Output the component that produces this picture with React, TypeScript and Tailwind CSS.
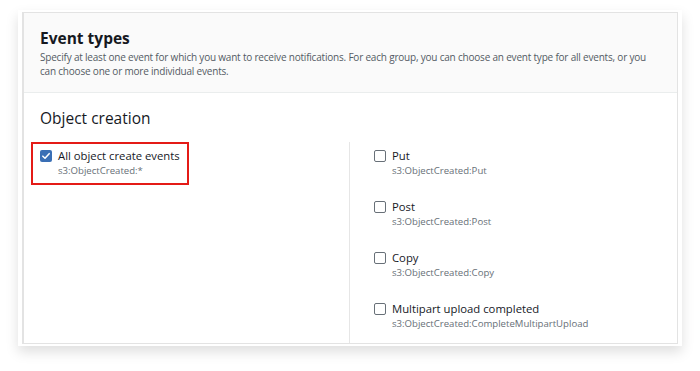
import React from 'react'

const events = [
  { name: 'Put', code: 's3:ObjectCreated:Put' },
  { name: 'Post', code: 's3:ObjectCreated:Post' },
  { name: 'Copy', code: 's3:ObjectCreated:Copy' },
  { name: 'Multipart upload completed', code: 's3:ObjectCreated:CompleteMultipartUpload' }
]

const Box = ({ checked }: { checked?: boolean }) =>
  checked ? (
    <span className="mt-[1px] flex h-[12px] w-[12px] shrink-0 items-center justify-center rounded-[2px] bg-[#3a6fb5]">
      <svg viewBox="0 0 12 12" className="h-[10px] w-[10px]">
        <path d="M2.2 6.2 4.8 8.7 9.8 3.2" fill="none" stroke="#fff" strokeWidth="1.8" strokeLinecap="round" strokeLinejoin="round" />
      </svg>
    </span>
  ) : (
    <span className="mt-[1px] block h-[12px] w-[12px] shrink-0 rounded-[2px] border border-[#687078] bg-white" />
  )

const Option = ({ name, code, checked }: { name: string; code: string; checked?: boolean }) => (
  <div className="flex gap-[6px]">
    <Box checked={checked} />
    <div className="flex flex-col">
      <span className="text-[11.3px] leading-[14px] font-medium text-[#16191f]">{name}</span>
      <span className="mt-[2px] text-[9.6px] leading-[12px] text-[#687078]">{code}</span>
    </div>
  </div>
)

export default function App() {
  return (
    <div className="h-[371px] w-[700px] bg-white pt-[10px] pl-[18px]" style={{ fontFamily: '"Open Sans", "Noto Sans", sans-serif' }}>
      <div className="h-[336px] w-[664px] bg-white px-[4px] pt-[2px] pb-[2px] shadow-[0_6px_12px_rgba(0,0,0,0.13)]">
        <div className="flex h-full flex-col border border-l-2 border-[#e3e3e3] bg-white">
          <div className="border-b border-[#eaeded] bg-[#fafafa] pt-[14px] pr-[20px] pb-[14px] pl-[16px]">
            <h2 className="text-[15.5px] leading-[22px] font-bold text-[#16191f]">Event types</h2>
            <p className="mt-[1px] text-[10px] leading-[14px] tracking-[-0.2px] text-[#545b64]">
              Specify at least one event for which you want to receive notifications. For each group, you can choose an event type for all events, or you can choose one or more individual events.
            </p>
          </div>
          <div className="flex flex-1 flex-col pt-[14px] pl-[16px]">
            <h3 className="text-[15.5px] leading-[22px] text-[#16191f]">Object creation</h3>
            <div className="mt-[13px] flex flex-1">
              <div className="w-[309px]">
                <div className="-ml-[9px] w-[158px] border-2 border-[#e41b17] pt-[5px] pb-[6px] pl-[7px]">
                  <Option name="All object create events" code="s3:ObjectCreated:*" checked />
                </div>
              </div>
              <div className="flex flex-col gap-[23px] border-l border-[#e6e6e6] pt-[7px] pl-[24px]">
                {events.map((e) => (
                  <Option key={e.name} name={e.name} code={e.code} />
                ))}
              </div>
            </div>
          </div>
        </div>
      </div>
    </div>
  )
}
